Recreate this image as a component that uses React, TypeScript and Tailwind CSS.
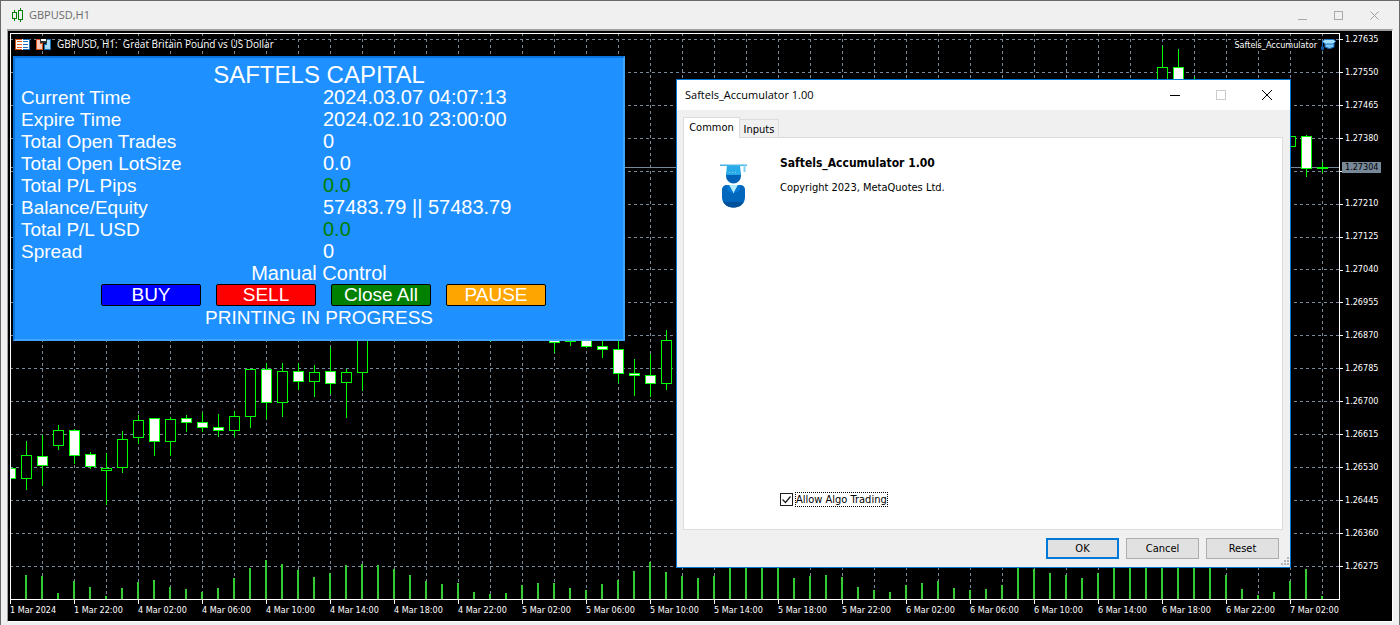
import React from "react";

type Candle = [x: number, high: number, top: number, bottom: number, low: number, bear: number];

const priceLevels = [
  { y: 39, label: "1.27635" },
  { y: 72, label: "1.27550" },
  { y: 105, label: "1.27465" },
  { y: 138, label: "1.27380" },
  { y: 171, label: "1.27295" },
  { y: 204, label: "1.27210" },
  { y: 237, label: "1.27125" },
  { y: 269, label: "1.27040" },
  { y: 302, label: "1.26955" },
  { y: 335, label: "1.26870" },
  { y: 368, label: "1.26785" },
  { y: 401, label: "1.26700" },
  { y: 434, label: "1.26615" },
  { y: 467, label: "1.26530" },
  { y: 500, label: "1.26445" },
  { y: 533, label: "1.26360" },
  { y: 566, label: "1.26275" },
];

const timeLabels = [
  "1 Mar 2024", "1 Mar 22:00", "4 Mar 02:00", "4 Mar 06:00", "4 Mar 10:00", "4 Mar 14:00", "4 Mar 18:00",
  "4 Mar 22:00", "5 Mar 02:00", "5 Mar 06:00", "5 Mar 10:00", "5 Mar 14:00", "5 Mar 18:00", "5 Mar 22:00",
  "6 Mar 02:00", "6 Mar 06:00", "6 Mar 10:00", "6 Mar 14:00", "6 Mar 18:00", "6 Mar 22:00", "7 Mar 02:00",
];

const candles: Candle[] = [
  [10, 468, 468, 478, 478, 1],
  [26, 441, 455, 478, 489, 0],
  [42, 435, 456, 465, 485, 1],
  [58, 425, 430, 445, 449, 0],
  [74, 429, 430, 455, 463, 1],
  [90, 452, 454, 466, 468, 1],
  [106, 453, 468, 470, 504, 0],
  [122, 431, 439, 467, 472, 0],
  [138, 415, 420, 437, 443, 0],
  [154, 418, 418, 441, 455, 1],
  [170, 417, 419, 441, 455, 0],
  [186, 415, 418, 422, 431, 1],
  [202, 413, 422, 427, 431, 1],
  [218, 414, 427, 430, 436, 1],
  [234, 411, 416, 430, 436, 0],
  [250, 369, 369, 416, 427, 0],
  [266, 363, 369, 402, 418, 1],
  [282, 363, 371, 402, 416, 0],
  [298, 363, 371, 381, 389, 1],
  [314, 365, 372, 381, 396, 0],
  [330, 347, 371, 383, 393, 1],
  [346, 369, 372, 382, 417, 0],
  [362, 320, 330, 372, 390, 0],
  [490, 320, 325, 335, 341, 0],
  [554, 330, 335, 342, 352, 1],
  [570, 330, 335, 341, 345, 1],
  [586, 330, 335, 346, 347, 1],
  [602, 338, 346, 349, 357, 1],
  [618, 336, 349, 373, 382, 1],
  [634, 359, 373, 375, 395, 1],
  [650, 354, 375, 383, 396, 1],
  [666, 330, 340, 383, 389, 0],
  [1162, 46, 67, 100, 110, 0],
  [1178, 49, 67, 100, 110, 1],
  [1194, 77, 90, 100, 110, 1],
  [1290, 136, 136, 146, 146, 0],
  [1306, 135, 136, 168, 176, 1],
];

// Top edge of every volume bar, one bar each 16 px, starting at the second candle.
const volumeTops = [
  575, 576, 593, 581, 587, 596, 588, 582, 580, 587, 589, 592, 588, 578, 568, 560, 564, 570, 577, 573, 565, 564, 565,
  569, 575, 581, 584, 583, 592, 594, 593, 585, 583, 583, 588, 590, 584, 580, 571, 562, 572, 576, 578, 576, 560, 560,
  560, 560, 578, 576, 575, 577, 587, 590, 592, 585, 583, 581, 588, 590, 589, 585, 560, 569, 573, 575, 578, 573, 560,
  560, 560, 560, 560, 560, 560, 575, 589, 595, 592, 581, 569, 596,
];

const stats = [
  { label: "Current Time", value: "2024.03.07 04:07:13", green: false },
  { label: "Expire Time", value: "2024.02.10 23:00:00", green: false },
  { label: "Total Open Trades", value: "0", green: false },
  { label: "Total Open LotSize", value: "0.0", green: false },
  { label: "Total P/L Pips", value: "0.0", green: true },
  { label: "Balance/Equity", value: "57483.79 || 57483.79", green: false },
  { label: "Total P/L USD", value: "0.0", green: true },
  { label: "Spread", value: "0", green: false },
];

function Chart() {
  return (
    <svg className="block h-[567px] w-full bg-black" shapeRendering="crispEdges" aria-label="GBPUSD H1 candlestick chart">
      <g transform="translate(-10 -33)">
        {Array.from({ length: 41 }, (_, i) => 42 + i * 32).map((x) => (
          <line key={x} x1={x + 0.5} x2={x + 0.5} y1={33} y2={599} stroke="#778899" strokeDasharray="3 3" />
        ))}
        {priceLevels.map((p) => (
          <line key={p.y} x1={10} x2="120%" y1={p.y + 0.5} y2={p.y + 0.5} stroke="#778899" strokeDasharray="3 3" />
        ))}
        <line x1={10} x2="120%" y1={167.5} y2={167.5} stroke="#778899" />
        {volumeTops.map((top, i) => (
          <rect key={i} x={25 + i * 16} y={top} width={2} height={599 - top} fill="#32cd32" />
        ))}
        {candles.map(([x, high, top, bottom, low, bear]) => (
          <g key={x}>
            <rect x={x} y={high} width={1} height={low - high + 1} fill="#00ff00" />
            <rect
              x={x - 4.5}
              y={top + 0.5}
              width={10}
              height={bottom - top}
              stroke="#00ff00"
              fill={bear ? "#ffffff" : "#000000"}
            />
          </g>
        ))}
        <rect x={1322} y={162} width={1} height={11} fill="#00ff00" />
        <rect x={1317} y={167} width={11} height={2} fill="#00ff00" />
        <line x1={10} x2="120%" y1={33.5} y2={33.5} stroke="#ffffff" />
        <line x1={10} x2="120%" y1={599.5} y2={599.5} stroke="#ffffff" />
        <line x1={10.5} x2={10.5} y1={33} y2={600} stroke="#ffffff" />
      </g>
    </svg>
  );
}

function DepthIcon() {
  return (
    <svg width="15" height="11" viewBox="0 0 15 11" shapeRendering="crispEdges" aria-hidden="true">
      <rect width="15" height="11" fill="#fff" />
      <path d="M0 0h7v1H1v9h6v1H0z" fill="#d9531e" />
      <path d="M15 0H8v1h6v9H8v1h7z" fill="#1d6fb8" />
      <path d="M2 2h5v1H2zM2 5h5v1H2zM2 8h5v1H2z" fill="#e2622f" />
      <path d="M8 2h5v1H8zM8 5h5v1H8zM8 8h5v1H8z" fill="#1d6fb8" />
    </svg>
  );
}

function TradeIcon() {
  return (
    <svg width="15" height="11" viewBox="0 0 15 11" shapeRendering="crispEdges" aria-hidden="true">
      <path d="M0 0h5v4h2v7H0z" fill="#d9531e" />
      <path d="M1 1h3v4h2v5H1z" fill="#f9cdbb" />
      <path d="M10 0h5v11H8V5h2z" fill="#1d6fb8" />
      <path d="M11 1h3v9H9V6h2z" fill="#a9dcf7" />
      <path d="M4 0h7v4H4z" fill="#333" />
      <path d="M5 0h5v2H5z" fill="#fff" />
    </svg>
  );
}

function CapIcon() {
  return (
    <svg width="15" height="13" viewBox="0 0 15 13" aria-hidden="true">
      <path d="M4 5h9v4q-4.500 3-9 0z" fill="#7cc8f5" stroke="#1268b8" />
      <path d="M1 3.500 4 1.500h9L14.500 3.500 12 6H4.500z" fill="#a5defa" stroke="#1976c8" />
      <path d="M1.500 4v5" stroke="#1565b5" />
      <path d="M0 8.500h3V11q-1.500 3-3 0z" fill="#0d57a6" />
    </svg>
  );
}

function GraduateIcon() {
  return (
    <svg width="28" height="44" viewBox="0 0 28 44" aria-hidden="true">
      <path d="M6 9h15v3a7.500 7.500 0 0 1-15 0z" fill="#0063b8" />
      <path d="M7 1h13l1 10H6z" fill="#29aae8" />
      <path d="M0 .500h27v1.500H0z" fill="#45b4e6" />
      <path d="M23.500 1h2v7h-2z" fill="#7fd0f2" />
      <path d="M9 8.500h9" stroke="#7fd0f2" strokeDasharray="1 2" />
      <path d="M2 26c0-3.500 2-5 5-5h13c3 0 5 1.500 5 5v7c0 6.500-5 10.500-11.500 10.500S2 39.500 2 33z" fill="#0067bd" />
      <path d="M3.500 38h20c-2 3.800-5.700 5.500-10 5.500s-8-1.700-10-5.500z" fill="#00509c" />
      <path d="M9 21h9l-4.500 8.500z" fill="#b5ecfb" />
      <path d="M7 21h2l4.500 8.500-6-2.500zM20 21h-2l-4.500 8.500 6-2.500z" fill="#0078d4" />
    </svg>
  );
}

function StatsPanel() {
  const button =
    "h-[22px] w-[100px] rounded-[2px] border border-black text-center text-[19px] leading-[20px] text-white";
  return (
    <section className="absolute top-[25px] left-[5px] h-[285px] w-[612px] border-2 border-t-[#0a74dc] border-r-[#3fa4fa] border-b-[#3fa4fa] border-l-[#0a74dc] bg-[#1e90ff] font-['Liberation_Sans',Arial,sans-serif] text-[19px] leading-[22px] text-white">
      <h1 className="pt-1 text-center text-[24px] leading-[25px]">SAFTELS CAPITAL</h1>
      <dl className="pl-[6px]">
        {stats.map((s) => (
          <div key={s.label} className="flex">
            <dt className="w-[302px]">{s.label}</dt>
            <dd className={s.green ? "text-[20px] leading-[20px] text-[#008000]" : "text-[20px] leading-[20px]"}>{s.value}</dd>
          </div>
        ))}
      </dl>
      <p className="text-center text-[20px] leading-[21px]">Manual Control</p>
      <div className="flex gap-[15px] pl-[86px]">
        <button className={`${button} bg-[#0000ff]`}>BUY</button>
        <button className={`${button} bg-[#ff0000]`}>SELL</button>
        <button className={`${button} bg-[#008000]`}>Close All</button>
        <button className={`${button} bg-[#ffa500]`}>PAUSE</button>
      </div>
      <p className="text-center leading-[24px]">PRINTING IN PROGRESS</p>
    </section>
  );
}

function PropertiesDialog() {
  const button = "h-[21px] w-[73px] bg-[#e1e1e1] text-center";
  return (
    <section
      role="dialog"
      aria-label="Saftels_Accumulator 1.00"
      className="absolute top-[48px] left-[668px] flex h-[489px] w-[615px] flex-col border border-[#0078d7] bg-[#f0f0f0] font-['DejaVu_Sans_Condensed','Noto_Sans',sans-serif] text-[11px] leading-[14px] text-black"
    >
      <header className="flex h-[30px] shrink-0 items-center bg-white pl-2">
        <h2 className="flex-1 font-['Open_Sans','Noto_Sans',sans-serif] text-[11px]">Saftels_Accumulator 1.00</h2>
        <button aria-label="Minimize" className="grid h-full w-[46px] place-items-center">
          <svg width="10" height="10" shapeRendering="crispEdges"><path d="M0 5.500h10" stroke="#000" /></svg>
        </button>
        <button aria-label="Maximize" disabled className="grid h-full w-[46px] place-items-center">
          <svg width="10" height="10" shapeRendering="crispEdges"><rect x=".5" y=".5" width="9" height="9" fill="none" stroke="#ccc" /></svg>
        </button>
        <button aria-label="Close" className="grid h-full w-[46px] place-items-center">
          <svg width="10" height="10"><path d="M0 0l10 10M10 0L0 10" stroke="#000" /></svg>
        </button>
      </header>
      <div role="tablist" className="flex h-[27px] shrink-0 items-end pl-[6px]">
        <button role="tab" aria-selected="true" className="z-10 -mb-px h-[21px] w-[57px] border border-b-0 border-[#dcdcdc] bg-white">
          Common
        </button>
        <button role="tab" aria-selected="false" className="h-[18px] w-[39px] border border-b-0 border-l-0 border-[#dcdcdc] pt-[2px]">
          Inputs
        </button>
      </div>
      <div className="mr-[7px] ml-[6px] flex h-[393px] shrink-0 border border-[#dcdcdc] bg-white pt-[17px] pl-[36px]">
        <div className="w-[60px] shrink-0 pt-[9px]"><GraduateIcon /></div>
        <div className="flex flex-col items-start">
          <h3 className="text-[12px] leading-[16px] font-bold">Saftels_Accumulator 1.00</h3>
          <p className="mt-[10px]">Copyright 2023, MetaQuotes Ltd.</p>
          <label className="mt-[297px] flex items-center gap-[2px]">
            <span className="grid">
              <input type="checkbox" defaultChecked className="peer col-start-1 row-start-1 size-[13px] appearance-none border border-[#1a1a1a] bg-white" />
              <svg className="pointer-events-none invisible col-start-1 row-start-1 peer-checked:visible" width="13" height="13" aria-hidden="true">
                <path d="M2.500 6.500l3 3 5-6" fill="none" stroke="#1a1a1a" strokeWidth="1.200" />
              </svg>
            </span>
            <span className="h-[15px] border border-dotted border-black leading-[13px]">Allow Algo Trading</span>
          </label>
        </div>
      </div>
      <footer className="flex flex-1 justify-end gap-[7px] pt-[8px] pr-[11px]">
        <button className={`${button} border-2 border-[#0078d7] leading-[17px]`}>OK</button>
        <button className={`${button} border border-[#adadad] leading-[19px]`}>Cancel</button>
        <button className={`${button} border border-[#adadad] leading-[19px]`}>Reset</button>
      </footer>
      <svg className="absolute right-[1px] bottom-[2px]" width="8" height="8" shapeRendering="crispEdges" aria-hidden="true">
        <path d="M6 0h2v2H6zM3 3h2v2H3zM6 3h2v2H6zM0 6h2v2H0zM3 6h2v2H3zM6 6h2v2H6z" fill="#b4b4b4" />
      </svg>
    </section>
  );
}

export default function App() {
  return (
    <div className="flex min-h-screen flex-col overflow-hidden border-x border-t border-[#696969] bg-[#f0f0f0]">
      <header className="flex h-[28px] shrink-0 items-center pl-[11px] font-['Open_Sans','Noto_Sans',sans-serif] text-[11px] text-[#6b6b6b]">
        <svg width="12" height="15" viewBox="0 0 12 15" fill="none" stroke="#008000" shapeRendering="crispEdges" aria-hidden="true">
          <path d="M2.500 2v2M2.500 11v2M8.500 0v2M8.500 12v2" />
          <path d="M.5 4.500h4v6H.5zM6.500 2.500h4v9h-4z" />
        </svg>
        <span className="flex-1 pl-[5px]">GBPUSD,H1</span>
        <button aria-label="Minimize chart" className="grid h-full w-9 place-items-center">
          <svg width="9" height="9" shapeRendering="crispEdges"><path d="M0 8.500h9" stroke="#aaa" /></svg>
        </button>
        <button aria-label="Maximize chart" className="grid h-full w-9 place-items-center">
          <svg width="9" height="9" shapeRendering="crispEdges"><rect x=".5" y=".5" width="8" height="8" fill="none" stroke="#aaa" /></svg>
        </button>
        <button aria-label="Close chart" className="mr-[7px] grid h-full w-9 place-items-center">
          <svg width="9" height="9"><path d="M.5.500l8 8M8.500.500l-8 8" stroke="#a0a0a0" /></svg>
        </button>
      </header>
      <main className="mr-[6px] mb-[3px] ml-[6px] flex flex-1 flex-col border border-t-2 border-[#a0a0a0] border-r-white border-b-white">
        <div className="relative flex flex-1 bg-black pt-[2px] pl-[2px] font-['DejaVu_Sans_Condensed','Noto_Sans',sans-serif] text-[9px] text-white">
          <div className="min-w-0 flex-1">
            <div className="border-r border-white"><Chart /></div>
            <div className="flex overflow-hidden leading-[12px] whitespace-nowrap">
              {timeLabels.map((t) => (
                <div key={t} className="w-16 shrink-0">
                  <div className="h-[4px] w-px bg-white" />
                  <div>{t}</div>
                </div>
              ))}
            </div>
          </div>
          <div className="relative w-[52px] shrink-0">
            <div className="-mt-[10px] flex h-[560px] flex-col">
              {priceLevels.map((p) => (
                <div key={p.label} className="flex flex-1 items-center gap-[2px]">
                  <span className="h-px w-[3px] bg-white" />
                  <span>{p.label}</span>
                </div>
              ))}
            </div>
            <div className="absolute top-[129px] left-[2px] h-[11px] w-[39px] bg-[#778899] pl-[3px] leading-[11px] text-black">1.27304</div>
          </div>
          <div className="absolute top-[7px] left-[7px] flex items-center gap-[6px] leading-[12px]">
            <DepthIcon />
            <TradeIcon />
            <span className="font-['Open_Sans','Noto_Sans',sans-serif] text-[10px] whitespace-pre">GBPUSD, H1:  Great Britain Pound vs US Dollar</span>
          </div>
          <div className="absolute top-[7px] right-[56px] flex items-center gap-[4px] leading-[12px]">
            <span>Saftels_Accumulator</span>
            <CapIcon />
          </div>
          <StatsPanel />
          <PropertiesDialog />
        </div>
      </main>
    </div>
  );
}
